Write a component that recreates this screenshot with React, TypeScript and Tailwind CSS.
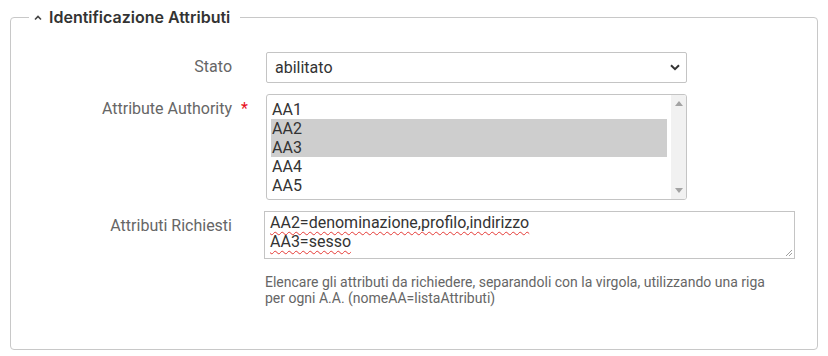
import React from "react";

const ff = { fontFamily: "Roboto, 'Liberation Sans', sans-serif" };

function Chevron() {
  return (
    <svg width="10" height="7" viewBox="0 0 10 7" className="block">
      <path d="M1 1.2 L5 5.2 L9 1.2" fill="none" stroke="#333" strokeWidth="2" />
    </svg>
  );
}

export default function App() {
  const opts = ["AA1", "AA2", "AA3", "AA4", "AA5"];
  const sel = new Set(["AA2", "AA3"]);
  return (
    <div className="w-[828px] h-[356px] bg-white pt-[6px] px-[10px]" style={ff}>
      <fieldset className="border border-[#c8c8c8] rounded-[4px] h-[344px] m-0 p-0">
        <legend className="ml-[18px] px-[4px] flex items-center h-[22px]">
          <svg width="10" height="8" viewBox="0 0 10 8" className="mr-[6px] mt-[1px]">
            <path d="M2 5.5 L5 2.5 L8 5.5" fill="none" stroke="#444" strokeWidth="1.6" />
          </svg>
          <span
            className="text-[16px] font-semibold text-[#333] leading-[22px] pr-[6px]"
            style={{ fontFamily: "Inter, 'Noto Sans', sans-serif" }}
          >
            Identificazione Attributi
          </span>
        </legend>

        <div className="flex flex-col gap-[11px] pt-[24px]">
          {/* Stato */}
          <div className="flex">
            <div className="w-[221px] text-right text-[16px] text-[#666] leading-[20px] pt-[5px]">Stato</div>
            <div className="w-[34px]" />
            <div className="w-[421px] h-[31px] border border-[#c4c4c4] rounded-[2px] flex items-center justify-between pl-[8px] pr-[6px] text-[16px] text-[#333]">
              <span>abilitato</span>
              <Chevron />
            </div>
          </div>

          {/* Attribute Authority */}
          <div className="flex">
            <div className="w-[221px] text-right text-[16px] text-[#666] leading-[20px] pt-[5px]">Attribute Authority</div>
            <div className="w-[34px] pl-[9px] pt-[5px] text-[16px] leading-[20px] text-[#e8101a]">*</div>
            <div className="w-[421px] h-[106px] border border-[#c4c4c4] rounded-[3px] flex overflow-hidden">
              <div className="flex-1 pl-[4px] pr-[4px] pt-[5px]">
                {opts.map((o) => (
                  <div
                    key={o}
                    className={`h-[19px] leading-[19px] text-[16px] text-[#333] pl-[1px] ${sel.has(o) ? "bg-[#cecece]" : ""}`}
                  >
                    {o}
                  </div>
                ))}
              </div>
              <div className="w-[15px] bg-[#f1f1f1] flex flex-col justify-between items-center py-[6px]">
                <svg width="8" height="5" viewBox="0 0 8 5">
                  <path d="M0 5 L4 0 L8 5 Z" fill="#a3a3a3" />
                </svg>
                <svg width="8" height="5" viewBox="0 0 8 5">
                  <path d="M0 0 L4 5 L8 0 Z" fill="#a3a3a3" />
                </svg>
              </div>
            </div>
          </div>

          {/* Attributi Richiesti */}
          <div className="flex">
            <div className="w-[221px] text-right text-[16px] text-[#666] leading-[20px] pt-[5px]">Attributi Richiesti</div>
            <div className="w-[32px]" />
            <div className="flex flex-col">
              <div className="relative w-[531px] h-[48px] border border-[#c4c4c4] pl-[5px] pt-[1px] text-[16px] leading-[19px] text-[#333]">
                <div>
                  <span className="underline decoration-wavy decoration-[#e53935] decoration-1 underline-offset-[3px]">
                    AA2=denominazione,profilo,indirizzo
                  </span>
                </div>
                <div>
                  <span className="underline decoration-wavy decoration-[#e53935] decoration-1 underline-offset-[3px]">
                    AA3=sesso
                  </span>
                </div>
                <svg width="8" height="8" viewBox="0 0 8 8" className="absolute right-[1px] bottom-[1px]">
                  <path d="M7 1 L1 7 M7 4 L4 7" stroke="#888" strokeWidth="0.8" />
                </svg>
              </div>
              <div className="mt-[15px] pl-[1px] w-[515px] text-[14px] leading-[16px] text-[#666]">
                Elencare gli attributi da richiedere, separandoli con la virgola, utilizzando una riga per ogni A.A. (nomeAA=listaAttributi)
              </div>
            </div>
          </div>
        </div>
      </fieldset>
    </div>
  );
}
